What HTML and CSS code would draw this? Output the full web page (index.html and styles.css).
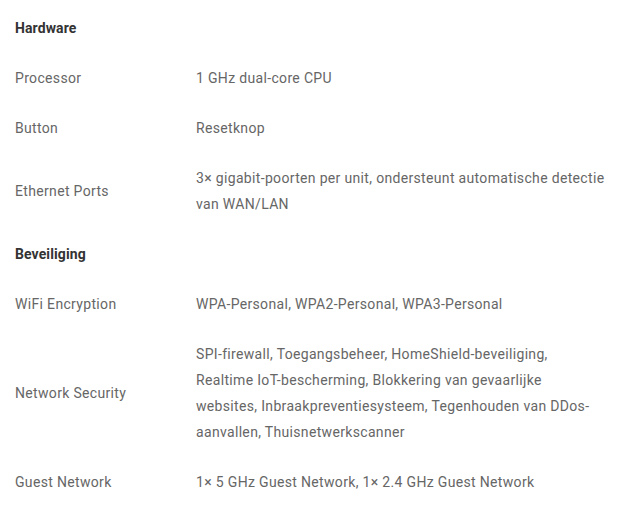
FILE: index.html
```html
<!DOCTYPE html>
<html lang="nl">

<head>
    <meta charset="UTF-8">
    <meta name="viewport" content="width=device-width, initial-scale=1.0">
    <title>Specificaties</title>
    <link rel="stylesheet" href="styles.css">
</head>

<body>
    <table class="specs">
        <tbody>
            <!-- Hardware -->
            <tr class="group">
                <th colspan="2">Hardware</th>
            </tr>
            <tr>
                <td class="label">Processor</td>
                <td class="value">1 GHz dual-core CPU</td>
            </tr>
            <tr>
                <td class="label">Button</td>
                <td class="value">Resetknop</td>
            </tr>
            <tr>
                <td class="label">Ethernet Ports</td>
                <td class="value">3× gigabit-poorten per unit, ondersteunt automatische detectie van WAN/LAN</td>
            </tr>

            <!-- Beveiliging -->
            <tr class="group">
                <th colspan="2">Beveiliging</th>
            </tr>
            <tr>
                <td class="label">WiFi Encryption</td>
                <td class="value">WPA-Personal, WPA2-Personal, WPA3-Personal</td>
            </tr>
            <tr>
                <td class="label">Network Security</td>
                <td class="value">SPI-firewall, Toegangsbeheer, HomeShield-beveiliging, Realtime IoT-bescherming, Blokkering van gevaarlijke websites, Inbraakpreventiesysteem, Tegenhouden van DDos-aanvallen, Thuisnetwerkscanner</td>
            </tr>
            <tr>
                <td class="label">Guest Network</td>
                <td class="value">1× 5 GHz Guest Network, 1× 2.4 GHz Guest Network</td>
            </tr>
        </tbody>
    </table>
</body>

</html>
```

FILE: styles.css
```css
body {
    margin: 0;
    padding: 3px 14px 0 15px;
    background-color: #fff;
    font-family: Roboto, "Liberation Sans", Arial, sans-serif;
    font-size: 14px;
    line-height: 26px;
    letter-spacing: 0.33px;
    color: #666;
}

.specs {
    width: 100%;
    border-collapse: collapse;
}

.specs th,
.specs td {
    padding: 12px 0;
    vertical-align: middle;
    text-align: left;
}

.specs th {
    font-weight: 700;
    letter-spacing: 0.1px;
    color: #333;
}

.specs .label {
    width: 181px;
}
```
